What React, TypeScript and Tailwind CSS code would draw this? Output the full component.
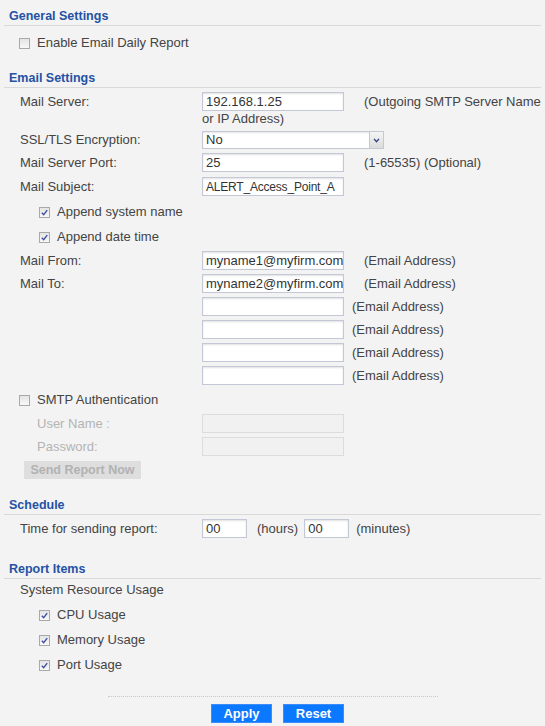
import React from "react";

const Check = ({ checked, disabled }: { checked?: boolean; disabled?: boolean }) => (
  <span
    className={`inline-flex h-[11px] w-[11px] shrink-0 items-center justify-center border ${
      disabled ? "border-[#cfcfcf] bg-[#efefef]" : "border-[#a9a9a9] bg-gradient-to-b from-[#e4e4e4] to-[#f8f8f8]"
    }`}
  >
    {checked && (
      <svg viewBox="0 0 10 10" className="h-[9px] w-[9px]">
        <path d="M2 5.2 L4.1 7.4 L8 2.4" fill="none" stroke="#3b4f9a" strokeWidth="1.5" />
      </svg>
    )}
  </span>
);

const Header = ({ title, className = "" }: { title: string; className?: string }) => (
  <div className={`mx-[4px] flex h-[26px] items-end border-b border-[#d9d9d9] pb-[2px] pl-[5px] ${className}`}>
    <span className="text-[12.5px] font-bold leading-[14px] text-[#2552a4]">{title}</span>
  </div>
);

const Input = ({
  value = "",
  disabled,
  w = "w-[142px]",
  textClass = "",
}: {
  value?: string;
  disabled?: boolean;
  w?: string;
  textClass?: string;
}) => (
  <div
    className={`flex h-[19px] ${w} shrink-0 items-center overflow-hidden whitespace-nowrap border px-[3px] ${textClass} ${
      disabled
        ? "border-[#dcdcdc] bg-[#f1f1f1]"
        : "border-[#c3c7d6] bg-white text-[#333] shadow-[inset_0_1px_2px_rgba(0,0,0,0.12)]"
    }`}
  >
    {value}
  </div>
);

const Row = ({
  label,
  children,
  className = "",
  labelClass = "text-[#444]",
}: {
  label: string;
  children?: React.ReactNode;
  className?: string;
  labelClass?: string;
}) => (
  <div className={`flex h-[19px] items-center ${className}`}>
    <span className={`w-[202px] shrink-0 pl-[20px] ${labelClass}`}>{label}</span>
    {children}
  </div>
);

const CheckRow = ({
  label,
  checked,
  indent,
  className = "",
}: {
  label: string;
  checked?: boolean;
  indent?: boolean;
  className?: string;
}) => (
  <div className={`flex h-[20px] items-center gap-[7px] ${indent ? "pl-[39px]" : "pl-[19px]"} ${className}`}>
    <Check checked={checked} />
    <span className="text-[#444]">{label}</span>
  </div>
);

export default function App() {
  return (
    <div
      className="h-[726px] w-[545px] overflow-hidden bg-[#f3f3f3] text-[13px] leading-[14px] text-[#444]"
      style={{ fontFamily: '"Liberation Sans", Arial, sans-serif' }}
    >
      <Header title="General Settings" />
      <CheckRow label="Enable Email Daily Report" className="mt-[7px]" />

      <Header title="Email Settings" className="mt-[9px]" />
      <Row label="Mail Server:" className="mt-[4px]">
        <Input value="192.168.1.25" />
        <span className="ml-[20px] whitespace-nowrap">(Outgoing SMTP Server Name</span>
      </Row>
      <div className="mt-[1px] h-[14px] pl-[202px]">or IP Address)</div>
      <Row label="SSL/TLS Encryption:" className="mt-[5px] !h-[18px]">
        <div className="flex h-[18px] w-[182px] items-center border border-[#c3c7d6] bg-white pl-[3px] shadow-[inset_0_1px_2px_rgba(0,0,0,0.1)]">
          <span className="flex-1 text-[#333]">No</span>
          <span className="flex h-full w-[14px] items-center justify-center border-l border-[#c3c7d6] bg-gradient-to-b from-[#f4f4f4] to-[#dcdcdc]">
            <svg viewBox="0 0 8 6" className="h-[5px] w-[7px]">
              <path d="M1 1 L4 4.5 L7 1" fill="none" stroke="#2e3f7a" strokeWidth="1.6" />
            </svg>
          </span>
        </div>
      </Row>
      <Row label="Mail Server Port:" className="mt-[4px]">
        <Input value="25" />
        <span className="ml-[20px]">(1-65535) (Optional)</span>
      </Row>
      <Row label="Mail Subject:" className="mt-[5px]">
        <Input value="ALERT_Access_Point_A" textClass="text-[12px] tracking-[-0.2px]" />
      </Row>
      <CheckRow label="Append system name" checked indent className="mt-[6px]" />
      <CheckRow label="Append date time" checked indent className="mt-[5px]" />
      <Row label="Mail From:" className="mt-[4px]">
        <Input value="myname1@myfirm.com" />
        <span className="ml-[20px]">(Email Address)</span>
      </Row>
      <Row label="Mail To:" className="mt-[4px]">
        <Input value="myname2@myfirm.com" />
        <span className="ml-[20px]">(Email Address)</span>
      </Row>
      {[0, 1, 2, 3].map((i) => (
        <Row key={i} label="" className="mt-[4px]">
          <Input />
          <span className="ml-[8px]">(Email Address)</span>
        </Row>
      ))}
      <CheckRow label="SMTP Authentication" className="mt-[5px]" />
      <Row label="User Name :" className="mt-[4px]" labelClass="text-[#b4b4b4] !pl-[37px]">
        <Input disabled />
      </Row>
      <Row label="Password:" className="mt-[4px]" labelClass="text-[#b4b4b4] !pl-[37px]">
        <Input disabled />
      </Row>
      <div className="ml-[24px] mt-[5px] flex h-[18px] w-[117px] items-center justify-center bg-[#dedede] text-[12.5px] font-bold text-[#b2b2b2]">
        Send Report Now
      </div>

      <Header title="Schedule" className="mt-[10px]" />
      <Row label="Time for sending report:" className="mt-[4px]">
        <Input value="00" w="w-[45px]" />
        <span className="ml-[10px]">(hours)</span>
        <div className="ml-[6px]">
          <Input value="00" w="w-[45px]" />
        </div>
        <span className="ml-[7px]">(minutes)</span>
      </Row>

      <Header title="Report Items" className="mt-[15px]" />
      <div className="mt-[4px] flex h-[14px] items-center pl-[20px]">System Resource Usage</div>
      <CheckRow label="CPU Usage" checked indent className="mt-[8px]" />
      <CheckRow label="Memory Usage" checked indent className="mt-[5px]" />
      <CheckRow label="Port Usage" checked indent className="mt-[5px]" />

      <div className="ml-[108px] mt-[21px] w-[330px] border-t border-dotted border-[#c8c8c8]" />
      <div className="mt-[7px] flex gap-[11px] pl-[211px]">
        <div className="flex h-[19px] w-[61px] items-center justify-center border border-[#3b8cff] bg-[#0a78ff] text-[13px] font-bold text-white">
          Apply
        </div>
        <div className="flex h-[19px] w-[61px] items-center justify-center border border-[#3b8cff] bg-[#0a78ff] text-[13px] font-bold text-white">
          Reset
        </div>
      </div>
    </div>
  );
}
